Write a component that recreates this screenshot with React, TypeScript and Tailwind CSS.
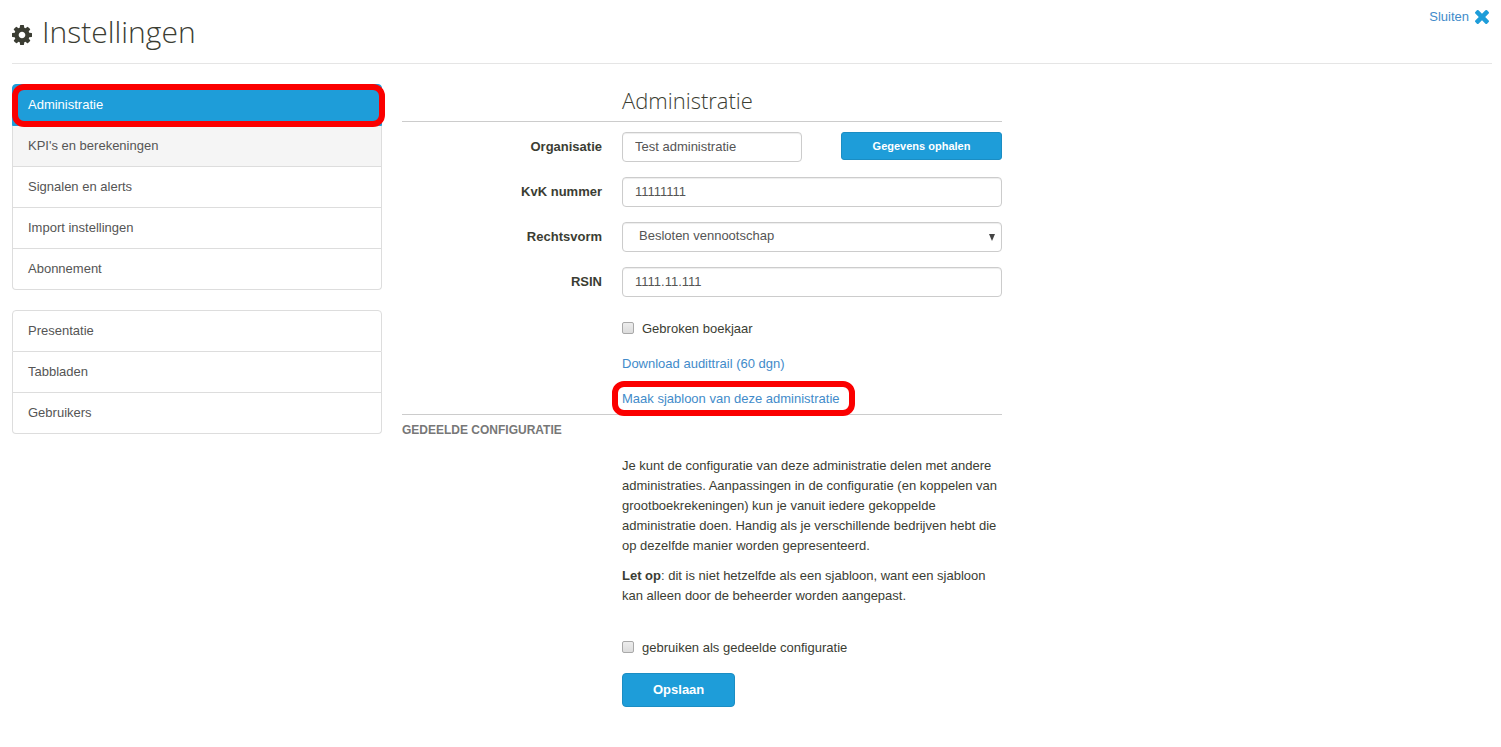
import React, { useState } from 'react';

const CogIcon: React.FC<{ className?: string }> = ({ className }) => (
  <svg className={className} viewBox="0 128 1536 1536" fill="currentColor" aria-hidden="true">
    <path d="M1024 896q0-106-75-181t-181-75-181 75-75 181 75 181 181 75 181-75 75-181zm512-109v222q0 12-8 23t-20 13l-185 28q-19 54-39 91 35 50 107 138 10 12 10 25t-9 23q-27 37-99 108t-94 71q-12 0-26-9l-138-108q-44 23-91 38-16 136-29 186-7 28-36 28h-222q-14 0-24.5-8.5t-11.5-21.5l-28-184q-49-16-90-37l-141 107q-10 9-25 9-14 0-25-11-126-114-165-168-7-10-7-23 0-12 8-23 15-21 51-66.5t54-70.5q-27-50-41-99l-183-27q-13-2-21-12.5t-8-23.5v-222q0-12 8-23t19-13l186-28q14-46 39-92-40-57-107-138-10-12-10-24 0-10 9-23 26-36 98.5-107.5t94.5-71.5q13 0 26 10l138 107q44-23 91-38 16-136 29-186 7-28 36-28h222q14 0 24.5 8.5t11.5 21.5l28 184q49 16 90 37l142-107q9-9 24-9 13 0 25 10 129 119 165 170 7 8 7 22 0 12-8 23-15 21-51 66.5t-54 70.5q26 50 41 98l183 28q13 2 21 12.5t8 23.5z" />
  </svg>
);

const CloseIcon: React.FC<{ className?: string }> = ({ className }) => (
  <svg className={className} viewBox="110 366 1188 1188" fill="currentColor" aria-hidden="true">
    <path d="M1298 1322q0 40-28 68l-136 136q-28 28-68 28t-68-28l-294-294-294 294q-28 28-68 28t-68-28l-136-136q-28-28-28-68t28-68l294-294-294-294q-28-28-28-68t28-68l136-136q28-28 68-28t68 28l294 294 294-294q28-28 68-28t68 28l136 136q28 28 28 68t-28 68l-294 294 294 294q28 28 28 68z" />
  </svg>
);

const mainMenu = ['Administratie', "KPI's en berekeningen", 'Signalen en alerts', 'Import instellingen', 'Abonnement'];
const extraMenu = ['Presentatie', 'Tabbladen', 'Gebruikers'];

const itemStyle = (item: string) => {
  if (item === 'Administratie') return 'border-[#1e9dd9] bg-[#1e9dd9] text-white';
  if (item === "KPI's en berekeningen") return 'border-[#ddd] bg-[#f5f5f5] text-[#555]';
  return 'border-[#ddd] bg-white text-[#555] hover:bg-[#f5f5f5]';
};

const Menu: React.FC<{ items: string[] }> = ({ items }) => (
  <ul>
    {items.map((item, index) => (
      <li key={item}>
        <a
          href="#"
          className={`block border-x border-b px-[15px] py-2.5 ${index === 0 ? 'border-t rounded-t' : ''} ${
            index === items.length - 1 ? 'rounded-b' : ''
          } ${itemStyle(item)}`}
        >
          {item}
        </a>
      </li>
    ))}
  </ul>
);

const Highlight: React.FC<{ className: string }> = ({ className }) => (
  <span className={`absolute border-6 border-[#fb0000] rounded-xl pointer-events-none ${className}`} />
);

const fieldStyle =
  'h-[30px] w-full rounded border border-[#ccc] bg-white px-3 pb-0.5 text-[#555] shadow-[inset_0_1px_1px_rgba(0,0,0,0.075)] outline-none focus:border-[#66afe9]';

const Row: React.FC<{ label: string; id: string; children: React.ReactNode }> = ({ label, id, children }) => (
  <div className="flex gap-5 mb-[15px]">
    <label htmlFor={id} className="w-[200px] shrink-0 py-[5px] text-right font-bold">
      {label}
    </label>
    <div className="flex-1 flex items-start justify-between">{children}</div>
  </div>
);

const Checkbox: React.FC<{ label: string; id: string }> = ({ label, id }) => {
  const [checked, setChecked] = useState(false);

  return (
    <div className="flex items-start gap-2">
      <input
        id={id}
        type="checkbox"
        checked={checked}
        onChange={(e) => setChecked(e.target.checked)}
        className="size-3 mt-[3px] appearance-none rounded-xs border border-[#a9a9a9] bg-linear-to-b from-[#ededed] to-[#dcdcdc] checked:bg-[#1e9dd9] checked:bg-none"
      />
      <label htmlFor={id}>{label}</label>
    </div>
  );
};

export default function App() {
  const [organisation, setOrganisation] = useState('Test administratie');
  const [kvk, setKvk] = useState('11111111');
  const [rsin, setRsin] = useState('1111.11.111');

  return (
    <div className="min-h-screen bg-white pl-3 pr-[9px] pb-10 font-['Liberation_Sans',Arial,sans-serif] text-[13px] leading-5 text-[#3b3d33]">
      <header className="flex items-start justify-between h-16 border-b border-[#e5e5e5]">
        <h1 className="flex items-center gap-2.5 pt-3 font-['Open_Sans',sans-serif] text-[30px] leading-10 font-light">
          <CogIcon className="size-5 mt-1.5" />
          Instellingen
        </h1>
        <a href="#" className="flex items-center gap-1.5 pt-[7px] pr-[3px] text-[#428bca]">
          Sluiten
          <CloseIcon className="size-3.5 text-[#1e9dd9]" />
        </a>
      </header>

      <div className="flex gap-5 pt-5">
        <nav className="w-1/4 shrink-0 flex flex-col gap-5">
          <div className="relative">
            <Menu items={mainMenu} />
            <Highlight className="top-0 left-0 -right-[3px] h-[43px]" />
          </div>
          <Menu items={extraMenu} />
        </nav>

        <form className="flex-1 max-w-[600px]" onSubmit={(e) => e.preventDefault()}>
          <h2 className="pl-[220px] pt-px pb-1.5 mb-2.5 border-b border-[#ccc] font-['Open_Sans',sans-serif] text-[22px] leading-[30px] font-light">
            Administratie
          </h2>

          <Row label="Organisatie" id="organisatie">
            <div className="w-[180px]">
              <input id="organisatie" className={fieldStyle} value={organisation} onChange={(e) => setOrganisation(e.target.value)} />
            </div>
            <button type="button" className="h-7 w-[161px] rounded-[3px] border border-[#1b8dc3] bg-[#1e9dd9] text-[11px] font-bold text-white">
              Gegevens ophalen
            </button>
          </Row>
          <Row label="KvK nummer" id="kvk">
            <input id="kvk" className={fieldStyle} value={kvk} onChange={(e) => setKvk(e.target.value)} />
          </Row>
          <Row label="Rechtsvorm" id="rechtsvorm">
            <div className="relative w-full">
              <select id="rechtsvorm" className={`${fieldStyle} appearance-none pl-4`}>
                <option>Besloten vennootschap</option>
              </select>
              <svg className="absolute right-[7px] top-3 w-1.5 h-[7px] text-[#444] pointer-events-none" viewBox="0 0 6 7" fill="currentColor">
                <path d="M0 0h6L3 7z" />
              </svg>
            </div>
          </Row>
          <Row label="RSIN" id="rsin">
            <input id="rsin" className={fieldStyle} value={rsin} onChange={(e) => setRsin(e.target.value)} />
          </Row>

          <div className="flex flex-col items-start gap-[15px] pl-[220px] pt-[7px] pb-[5px]">
            <Checkbox id="boekjaar" label="Gebroken boekjaar" />
            <a href="#" className="text-[#428bca] hover:underline">Download audittrail (60 dgn)</a>
            <a href="#" className="relative text-[#428bca]">
              Maak sjabloon van deze administratie
              <Highlight className="-left-2.5 -right-[15px] -top-2 -bottom-[7px]" />
            </a>
          </div>

          <h3 className="border-t border-[#ccc] pt-[5px] text-xs leading-5 font-bold text-[#777] uppercase">Gedeelde configuratie</h3>

          <div className="pl-[220px] pt-4">
            <p className="mb-2.5">
              Je kunt de configuratie van deze administratie delen met andere administraties. Aanpassingen in de configuratie (en koppelen van grootboekrekeningen) kun je vanuit iedere gekoppelde administratie doen. Handig als je verschillende bedrijven hebt die op dezelfde manier worden gepresenteerd.
            </p>
            <p className="mb-8">
              <strong>Let op</strong>: dit is niet hetzelfde als een sjabloon, want een sjabloon kan alleen door de beheerder worden aangepast.
            </p>
            <Checkbox id="gedeeld" label="gebruiken als gedeelde configuratie" />
            <button type="submit" className="mt-[15px] h-[34px] px-[30px] rounded border border-[#1b8dc3] bg-[#1e9dd9] font-bold text-white">
              Opslaan
            </button>
          </div>
        </form>
      </div>
    </div>
  );
}
